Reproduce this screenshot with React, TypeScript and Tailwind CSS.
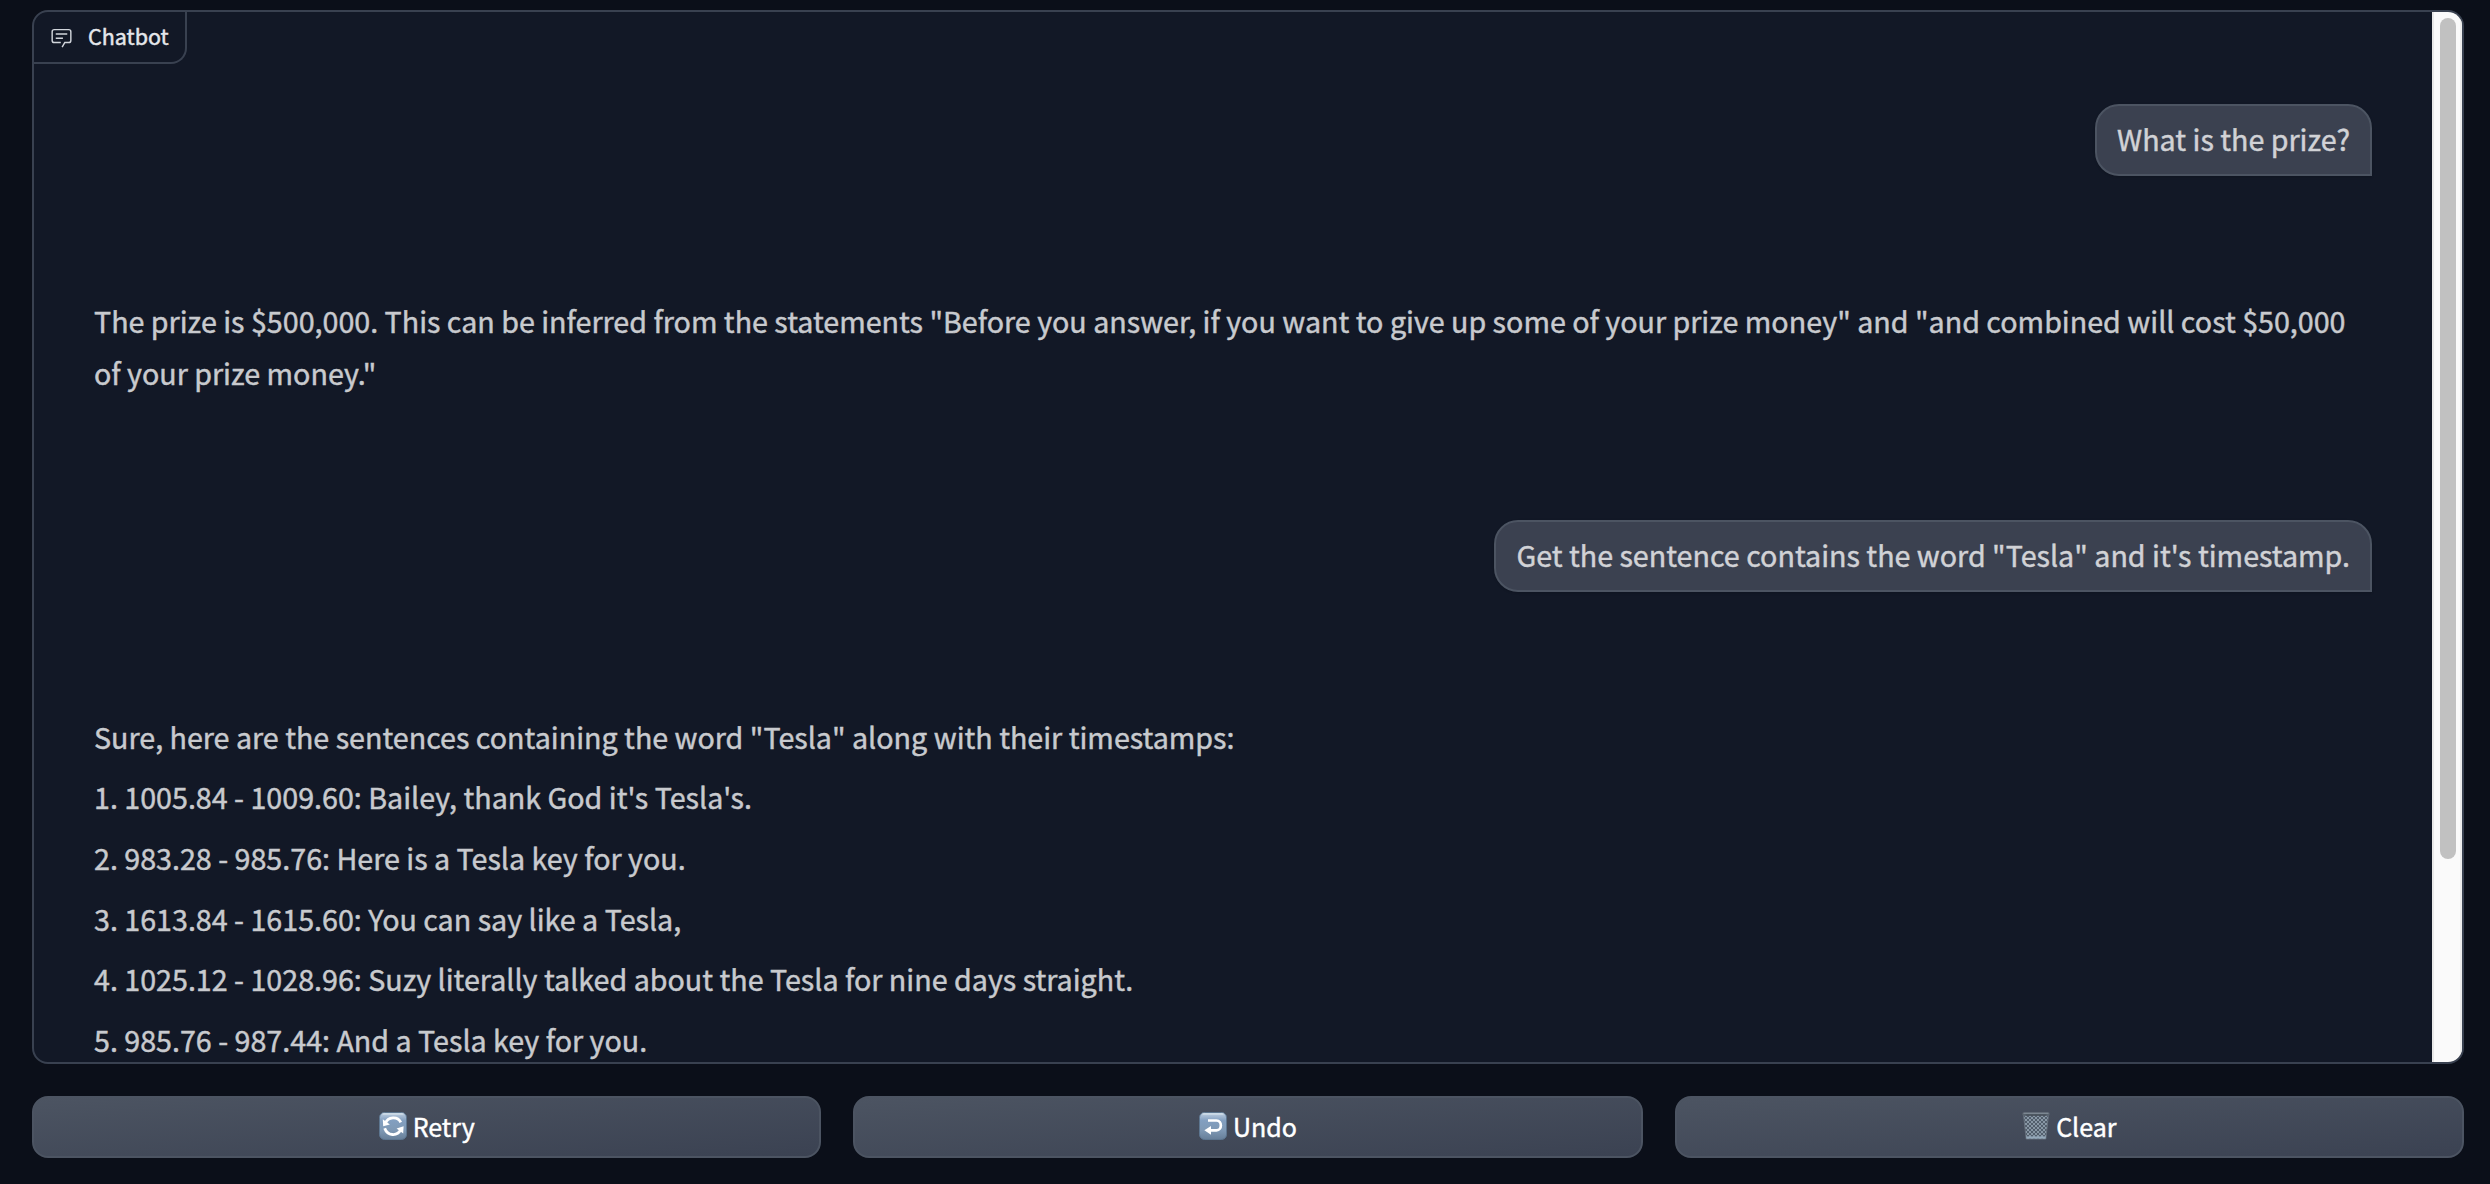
import React from "react";

const FONT = "font-['Noto_Sans_CJK_SC','Noto_Sans',sans-serif]";

function ChatIcon() {
  return (
    <svg viewBox="0 0 32 32" className="size-[23px] text-[#d1d5db]" fill="currentColor">
      <path d="M17.74 30 16 29l4-7h6a2 2 0 0 0 2-2V8a2 2 0 0 0-2-2H6a2 2 0 0 0-2 2v12a2 2 0 0 0 2 2h9v2H6a4 4 0 0 1-4-4V8a4 4 0 0 1 4-4h20a4 4 0 0 1 4 4v12a4 4 0 0 1-4 4h-4.84Z" />
      <path d="M8 10h16v2H8zM8 16h10v2H8z" />
    </svg>
  );
}

function KeycapTile({ id, children }: { id: string; children: React.ReactNode }) {
  return (
    <svg viewBox="0 0 28 28" className="size-[28px]">
      <defs>
        <linearGradient id={id} x1="0" y1="0" x2="0" y2="1">
          <stop offset="0" stopColor="#c3d3e2" />
          <stop offset="0.16" stopColor="#a0b6d0" />
          <stop offset="0.3" stopColor="#829fc0" />
          <stop offset="0.65" stopColor="#7f99b5" />
          <stop offset="1" stopColor="#677f99" />
        </linearGradient>
      </defs>
      <rect x="0.5" y="0.5" width="27" height="27" rx="5" fill={`url(#${id})`} stroke="#5d7690" strokeWidth="1" />
      <path d="M4 2h20" stroke="#dbe6ee" strokeWidth="1.4" strokeLinecap="round" opacity="0.7" />
      {children}
    </svg>
  );
}

function RetryIcon() {
  return (
    <KeycapTile id="retry-tile">
      <g fill="none" stroke="#fff" strokeWidth="2.8">
        <path d="M6.3 11.6C9 4.6 18.6 4 21.8 10.4" />
        <path d="M5.7 16.2C8.4 23.8 18 25 21.9 17.4" />
      </g>
      <path d="M3.8 7.2 4.2 14.3 10.9 12.6Z" fill="#fff" />
      <path d="M24.6 14.3 24.2 21.4 17.6 16.6Z" fill="#fff" />
    </KeycapTile>
  );
}

function UndoIcon() {
  return (
    <KeycapTile id="undo-tile">
      <path d="M9 8.5H17.5C23.3 8.5 23.3 18.3 17.5 18.3H11" fill="none" stroke="#fff" strokeWidth="2.7" />
      <path d="M5.4 18.3 12 13.9V22.7Z" fill="#fff" />
    </KeycapTile>
  );
}

function TrashIcon() {
  return (
    <svg viewBox="0 0 28 28" className="size-[28px]">
      <defs>
        <pattern id="mesh" width="4" height="4" patternUnits="userSpaceOnUse">
          <rect width="4" height="4" fill="#525e6c" />
          <path d="M0 0 4 4M4 0 0 4" stroke="#8f9dac" strokeWidth="0.9" />
        </pattern>
      </defs>
      <path d="M1.5 3H26.5L23.8 27H4.2Z" fill="url(#mesh)" stroke="#66717d" strokeWidth="0.9" />
      <path d="M4.2 25.5H23.8" stroke="#94a8ba" strokeWidth="2.2" />
      <rect x="0.3" y="0.6" width="27.4" height="3" rx="1.2" fill="#59636e" />
      <path d="M1.5 1.2H26.5" stroke="#8d99a3" strokeWidth="1" />
      <path d="M3.5 3.1H24.5" stroke="#3c434c" strokeWidth="0.9" />
    </svg>
  );
}

function UserMessage({ children }: { children: React.ReactNode }) {
  return (
    <div className="flex h-[72px] shrink-0 items-center self-end rounded-[24px] rounded-br-none border-2 border-[#4c5462] bg-[#3b4150] px-[20px] pb-[3px] whitespace-nowrap shadow-sm">
      {children}
    </div>
  );
}

function ActionButton({ icon, label }: { icon: React.ReactNode; label: string }) {
  return (
    <button className="flex h-[62px] items-center justify-center gap-[6px] rounded-[16px] border-2 border-[#4c5462] bg-linear-to-br from-[#4c5462] to-[#3b4252] pb-[2px] text-[25px] text-white">
      {icon}
      <span className="pt-[1px]">{label}</span>
    </button>
  );
}

const SENTENCES = [
  "1. 1005.84 - 1009.60: Bailey, thank God it's Tesla's.",
  "2. 983.28 - 985.76: Here is a Tesla key for you.",
  "3. 1613.84 - 1615.60: You can say like a Tesla,",
  "4. 1025.12 - 1028.96: Suzy literally talked about the Tesla for nine days straight.",
  "5. 985.76 - 987.44: And a Tesla key for you.",
];

export default function App() {
  return (
    <div className={`flex h-[1184px] w-full flex-col gap-8 bg-[#0b0f19] pt-[10px] pr-[26px] pl-8 [-webkit-text-stroke:0.45px_currentColor] ${FONT}`}>
      <section className="relative flex h-[1054px] shrink-0 overflow-hidden rounded-[16px] border-2 border-[#394150] bg-[#121826]">
        <div className="absolute top-0 left-0 flex h-[52px] w-[153px] items-center rounded-br-[16px] border-r-2 border-b-2 border-[#394150] pl-[16px] text-[21.5px] text-[#e5e7eb]">
          <ChatIcon />
          <span className="-mt-[1px] pl-[15px]">Chatbot</span>
        </div>
        <div className="flex min-w-0 flex-1 flex-col pt-[92px] pr-[60px] pl-[60px] text-[28.66px] leading-[52px] text-[#d1d2d6]">
          <UserMessage>What is the prize?</UserMessage>
          <div className="mt-[119px] shrink-0 whitespace-nowrap text-[#c8cace]">
            <p>
              The prize is $500,000. This can be inferred from the statements "Before you answer, if you want to give up some of your prize money" and "and combined will cost $50,000
            </p>
            <p>of your prize money."</p>
          </div>
          <div className="h-[121px] shrink-0" />
          <UserMessage>Get the sentence contains the word "Tesla" and it's timestamp.</UserMessage>
          <div className="mt-[118.8px] flex shrink-0 flex-col gap-[8.6px] whitespace-nowrap text-[#c8cace]">
            <p>Sure, here are the sentences containing the word "Tesla" along with their timestamps:</p>
            {SENTENCES.map((s) => (
              <p key={s}>{s}</p>
            ))}
          </div>
        </div>
        <div className="w-[30px] border-x-2 border-l-[#e8e8e8] border-r-[#ededed] bg-[#fafafa] pt-[6px] pl-[6px]">
          <div className="h-[841px] w-[16px] rounded-full bg-[#c1c1c1]" />
        </div>
      </section>
      <div className="grid grid-cols-3 gap-8">
        <ActionButton icon={<RetryIcon />} label="Retry" />
        <ActionButton icon={<UndoIcon />} label="Undo" />
        <ActionButton icon={<TrashIcon />} label="Clear" />
      </div>
    </div>
  );
}
